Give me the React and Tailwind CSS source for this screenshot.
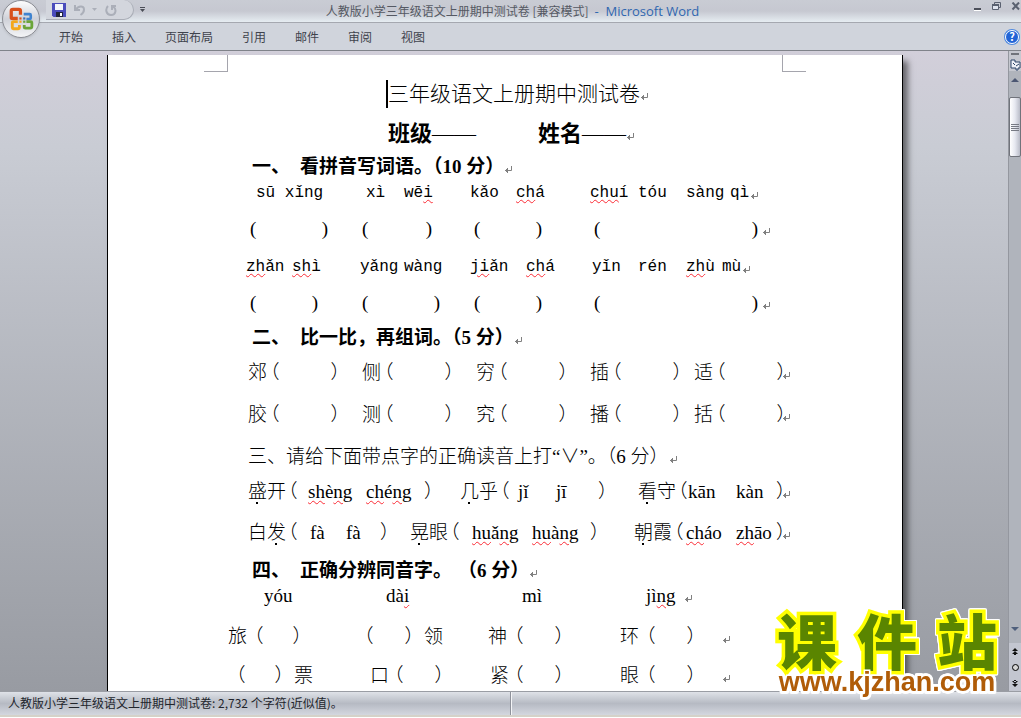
const tabs = ["开始", "插入", "页面布局", "引用", "邮件", "审阅", "视图"]

const compareRows = [
  ["郊", "侧", "穷", "插", "适"],
  ["胶", "测", "究", "播", "括"],
]

const Mark = ({ className = "" }) => (
  <svg viewBox="0 0 9 8" className={`mt-1.5 h-2 w-[9px] shrink-0 ${className}`} fill="none" stroke="#808080" aria-hidden="true">
    <path d="M7.5 0v4.5H1M3.5 2v5M2.5 3v3" />
  </svg>
)

const Line = ({ className = "", children }) => <div className={`flex items-center ${className}`}>{children}</div>

const Cell = ({ className = "", children }) => (
  <span className={`shrink-0 leading-6 whitespace-nowrap ${className}`}>{children}</span>
)

// halt keeps the full-width brackets at half an em
const Paren = ({ className = "", children }) => (
  <Cell className={`[font-feature-settings:'halt'] ${className}`}>{children}</Cell>
)

const Blank = ({ className = "" }) => (
  <span className={`flex shrink-0 justify-between leading-6 [font-feature-settings:'halt'] ${className}`}>
    <span>（</span>
    <span>）</span>
  </span>
)

const SmallBlank = ({ className = "" }) => (
  <span className={`flex shrink-0 justify-between leading-6 ${className}`}>
    <span>(</span>
    <span>)</span>
  </span>
)

// spelling squiggle
const Sq = ({ children }) => (
  <span className="underline decoration-red-500 decoration-wavy decoration-1 underline-offset-2">{children}</span>
)

// dot under the character that is asked about
const Dot = ({ children }) => (
  <span className="relative after:absolute after:-bottom-0.5 after:left-2 after:size-0.5 after:bg-black">{children}</span>
)

const OfficeButton = () => (
  <button
    type="button"
    aria-label="Office"
    className="absolute top-0 left-0.5 z-10 flex size-[38px] items-center justify-center rounded-full border border-[#8b8d94] bg-linear-to-b from-[#fdfdfe] via-[#cfd1d8] to-[#f4f5f7] shadow"
  >
    <svg viewBox="0 0 24 24" className="size-[26px] shrink-0" fill="none" strokeWidth="3">
      <path d="M9 11.500H4Q3 11.500 3 10.500V4.500Q3 3 4.500 3H10Q11.500 3 11.500 4.500V8" stroke="#d8501c" />
      <path d="M14.500 7.500H20Q21 7.500 21 8.500V11Q21 12 20 12H17" stroke="#3f83cf" strokeWidth="2.4" />
      <path d="M9 14.500H5Q4 14.500 4 15.500V20Q4 21 5 21H9.500Q10.500 21 10.500 20V17.500" stroke="#f3a81c" strokeWidth="2.6" />
      <path d="M17 14.500H21Q22 14.500 22 15.500V19Q22 20.500 20.500 20.500H16Q15 20.500 15 19.500V17.500" stroke="#6ba539" strokeWidth="2.6" />
      <path d="M10.500 10.500h2v2h-2z" fill="#d8501c" />
      <path d="M14 10.500h2v2h-2z" fill="#3f6fb5" />
      <path d="M10.500 13.500h2v2h-2z" fill="#f3a81c" />
      <path d="M14 13.500h2v2h-2z" fill="#6ba539" />
    </svg>
  </button>
)

const TitleBar = () => (
  <header className="grid h-[23px] grid-cols-[1fr_auto_1fr] border-b border-[#a5a8b0] bg-linear-to-b from-[#c9ccd4] via-[#c6c8d1] to-[#e6edf2]">
    <div className="flex items-start pl-[46px]">
      <div className="flex h-5 w-[88px] items-center gap-2 rounded-r-full border-r border-b border-[#a9adb6] bg-[#d3d6dd] pl-1.5">
        <button type="button" aria-label="保存">
          <svg viewBox="0 0 14 14" className="size-3.5">
            <path d="M0 0h14v14H1.500L0 12.500z" fill="#4a4cbc" />
            <path d="M3 1h8v6H3z" fill="#f2f5fb" />
            <path d="M4 9h7v5H4z" fill="#20243c" />
            <path d="M8 10h2v3H8z" fill="#fff" />
          </svg>
        </button>
        <button type="button" aria-label="撤消" className="flex items-center gap-1.5">
          <svg viewBox="0 0 12 12" className="size-3" fill="none" stroke="#abafb9" strokeWidth="2">
            <path d="M1 1v5h5M2 5.500C4 2 10 1 10 5.500C10 8 9 9.500 6.500 11" />
          </svg>
          <svg viewBox="0 0 5 3" className="h-[3px] w-[5px]" fill="#abafb9">
            <path d="M0 0h5L2.500 3z" />
          </svg>
        </button>
        <button type="button" aria-label="重复">
          <svg viewBox="0 0 12 12" className="size-3" fill="none" stroke="#abafb9" strokeWidth="2">
            <path d="M3 2C0 5 1 11 6 11C11 11 12 5 8 2.500M7 6V2h4" />
          </svg>
        </button>
      </div>
      <button type="button" aria-label="自定义快速访问工具栏" className="mt-[7px] ml-1.5">
        <svg viewBox="0 0 5 5" className="size-[5px]" fill="#4b4e57">
          <path d="M0 0h5v1H0zM0 2h5L2.500 5z" />
        </svg>
      </button>
    </div>
    <h1 className="pl-1 text-[12px] leading-[22px] whitespace-nowrap text-[#555963]">
      人教版小学三年级语文上册期中测试卷 [兼容模式]
      <span className="ml-1.5 font-['Open_Sans'] text-[13px] text-[#2f67b0]">-&nbsp; Microsoft Word</span>
    </h1>
    <div className="flex items-start justify-end gap-2.5 pt-0.5">
      <button type="button" aria-label="最小化">
        <svg viewBox="0 0 8 9" className="h-[9px] w-2">
          <path d="M0 6h7v2H0z" fill="#4b4f5a" />
          <path d="M0 8h7v1H0z" fill="#fff" />
        </svg>
      </button>
      <button type="button" aria-label="还原">
        <svg viewBox="0 0 9 9" className="size-[9px]" fill="none" stroke="#5a6170">
          <path d="M2.500 3V.5h6v5H7" />
          <path d="M.5 2.500h6v5h-6z" fill="#dfe4ee" />
          <path d="M0 3h7" strokeWidth="2" />
        </svg>
      </button>
      <button type="button" aria-label="关闭">
        <svg viewBox="0 0 10 9" className="h-[9px] w-2.5" fill="none" stroke="#5a6170" strokeWidth="2">
          <path d="M1.500 .5L8 7.500M8 .5L1.500 7.500" />
        </svg>
      </button>
    </div>
  </header>
)

const TabBar = () => (
  <nav className="flex h-7 items-center border-b border-[#80838a] bg-[#d0d4dc] pl-[59px] shadow-[0_1px_0_#e6e8ec]">
    <div className="flex flex-1 gap-[29px] text-[12px] text-[#3f434d]">
      {tabs.map((tab) => (
        <button key={tab} type="button">
          {tab}
        </button>
      ))}
    </div>
    <button
      type="button"
      aria-label="帮助"
      className="mr-0.5 flex size-3.5 items-center justify-center rounded-full border border-white bg-[#2264d6] text-[11px] font-bold text-white ring-1 ring-[#4f8ae0]"
    >
      ?
    </button>
  </nav>
)

const Paper = () => (
  <article className="h-full w-full overflow-hidden border-x border-black bg-white font-['Liberation_Serif','Noto_Sans_CJK_SC',serif] text-[19px] font-light text-black">
    <div className="flex justify-between px-24">
      <span className="h-[17px] w-6 border-r border-b border-[#a5a5ad]" />
      <span className="h-[17px] w-6 border-b border-l border-[#a5a5ad]" />
    </div>
    <div className="pt-0.5 pl-30">
      <Line className="h-10 pl-40 text-[21px]">
        <span className="-ml-0.5 h-7 w-0.5 bg-black" />
        <Cell>三年级语文上册期中测试卷</Cell>
        <Mark />
      </Line>
      <Line className="h-10 pl-40 text-[22px] font-bold">
        <Cell className="w-37.5">班级<span className="font-normal">——</span></Cell>
        <Cell className="w-22">姓名<span className="font-normal">——</span></Cell>
        <Mark />
      </Line>

      {/* 一 */}
      <Line className="h-6.5 pl-6 font-bold">
        <Cell className="w-12">一、</Cell>
        <Cell>看拼音写词语。（10 分）</Cell>
        <Mark />
      </Line>
      <Line className="h-6.5 pl-7 font-['Liberation_Mono'] text-[16px]">
        <Cell className="w-27.5">sū xǐnɡ</Cell>
        <Cell className="w-9.5">xì</Cell>
        <Cell className="w-16.5">wē<Sq>i</Sq></Cell>
        <Cell className="w-11.5">kǎo</Cell>
        <Cell className="w-18.5"><Sq>ch</Sq>á</Cell>
        <Cell className="w-12"><Sq>chu</Sq>í</Cell>
        <Cell className="w-12">tóu</Cell>
        <Cell className="w-11">sànɡ</Cell>
        <Cell className="w-5">qì</Cell>
        <Mark />
      </Line>
      <Line className="h-11.5 pl-5.5">
        <SmallBlank className="mr-8.5 w-19.5" />
        <SmallBlank className="mr-10.5 w-17.5" />
        <SmallBlank className="mr-13 w-17" />
        <SmallBlank className="mr-1 w-41" />
        <Mark />
      </Line>
      <Line className="h-7.5 pl-4.5 font-['Liberation_Mono'] text-[16px]">
        <Cell className="w-11.5"><Sq>zh</Sq>ǎn</Cell>
        <Cell className="w-17"><Sq>sh</Sq>ì</Cell>
        <Cell className="w-11">yǎnɡ</Cell>
        <Cell className="w-16.5">wànɡ</Cell>
        <Cell className="w-14"><Sq>ji</Sq>ǎn</Cell>
        <Cell className="w-16.5"><Sq>ch</Sq>á</Cell>
        <Cell className="w-11.5">yǐn</Cell>
        <Cell className="w-12">rén</Cell>
        <Cell className="w-9"><Sq>zh</Sq>ù</Cell>
        <Cell className="w-5">mù</Cell>
        <Mark />
      </Line>
      <Line className="h-10.5 pl-5.5">
        <SmallBlank className="mr-11 w-17" />
        <SmallBlank className="mr-8.5 w-19.5" />
        <SmallBlank className="mr-13 w-17" />
        <SmallBlank className="mr-1 w-41" />
        <Mark />
      </Line>

      {/* 二 */}
      <Line className="h-7 pl-6 font-bold">
        <Cell className="w-12">二、</Cell>
        <Cell>比一比，再组词。（5 分）</Cell>
        <Mark />
      </Line>
      {compareRows.map((row) => (
        <Line key={row[0]} className="h-10.5 pl-5">
          {row.map((char, i) => (
            <span key={char} className={i === 3 ? "mr-3 flex" : i === 4 ? "flex" : "mr-5.5 flex"}>
              <Cell className="w-5.5">{char}</Cell>
              <Blank className="w-17.5" />
            </span>
          ))}
          <Mark className="-ml-1" />
        </Line>
      ))}

      {/* 三 */}
      <Line className="h-10.5 pl-5">
        <Cell>三、请给下面带点字的正确读音上打“∨”。（6 分）</Cell>
        <Mark />
      </Line>
      <Line className="h-7 pl-5">
        <Cell className="w-10"><Dot>盛</Dot>开</Cell>
        <Paren className="w-5">（</Paren>
        <Cell className="w-14.5"><Sq>sh</Sq>è<Sq>ng</Sq></Cell>
        <Cell className="w-14.5"><Sq>ch</Sq>é<Sq>ng</Sq></Cell>
        <Paren className="w-9">）</Paren>
        <Cell className="w-10"><Dot>几</Dot>乎</Cell>
        <Paren className="w-4.5">（</Paren>
        <Cell className="w-9.5">jǐ</Cell>
        <Cell className="w-10.5">jī</Cell>
        <Paren className="w-10">）</Paren>
        <Cell className="w-10"><Dot>看</Dot>守</Cell>
        <Paren className="w-2.5">（</Paren>
        <Cell className="w-12">kān</Cell>
        <Cell className="w-10">kàn</Cell>
        <Paren className="w-1.5">）</Paren>
        <Mark />
      </Line>
      <Line className="h-13.5 pl-5">
        <Cell className="w-10">白<Dot>发</Dot></Cell>
        <Paren className="w-5.5">（</Paren>
        <Cell className="w-9">fà</Cell>
        <Cell className="w-8.5">fà</Cell>
        <Paren className="w-7.5">）</Paren>
        <Cell className="w-10"><Dot>晃</Dot>眼</Cell>
        <Paren className="w-5.5">（</Paren>
        <Cell className="w-15"><Sq>hu</Sq>ǎ<Sq>ng</Sq></Cell>
        <Cell className="w-14.5"><Sq>hu</Sq>à<Sq>ng</Sq></Cell>
        <Paren className="w-11">）</Paren>
        <Cell className="w-10"><Dot>朝</Dot>霞</Cell>
        <Paren className="w-3">（</Paren>
        <Cell className="w-12.5"><Sq>ch</Sq>áo</Cell>
        <Cell className="w-10"><Sq>zh</Sq>āo</Cell>
        <Paren className="w-1.5">）</Paren>
        <Mark />
      </Line>

      {/* 四 */}
      <Line className="h-5.5 pl-6 font-bold">
        <Cell className="w-12">四、</Cell>
        <Cell className="w-39.5">正确分辨同音字。</Cell>
        <Cell>（6 分）</Cell>
        <Mark />
      </Line>
      <Line className="h-7 pl-9">
        <Cell className="w-30.5">yóu</Cell>
        <Cell className="w-34">dà<Sq>i</Sq></Cell>
        <Cell className="w-31">mì</Cell>
        <Cell className="w-9.5">jì<Sq>ng</Sq></Cell>
        <Mark />
      </Line>
      <Line className="h-13.5">
        <Cell className="w-6.5">旅</Cell>
        <Blank className="mr-15.5 w-12" />
        <Blank className="mr-2.5 w-12.5" />
        <Cell className="w-16">领</Cell>
        <Cell className="w-6.5">神</Cell>
        <Blank className="mr-14 w-12.5" />
        <Cell className="w-6.5">环</Cell>
        <Blank className="mr-6.5 w-12.5" />
        <Mark />
      </Line>
      <Line className="h-6 pl-2">
        <Blank className="mr-2.5 w-12" />
        <Cell className="w-19">票</Cell>
        <Cell className="w-6">口</Cell>
        <Blank className="mr-11.5 w-12.5" />
        <Cell className="w-6">紧</Cell>
        <Blank className="mr-14 w-12.5" />
        <Cell className="w-6.5">眼</Cell>
        <Blank className="mr-6.5 w-12.5" />
        <Mark />
      </Line>
    </div>
  </article>
)

const ScrollBar = () => (
  <aside className="flex w-[13px] shrink-0 flex-col items-center border-l border-[#94979f] bg-[#b0b4bc]">
    <div className="flex h-5 w-full shrink-0 flex-col items-center gap-1 bg-[#c6c8d0] pt-0.5">
      <span className="h-0.5 w-2 shrink-0 bg-[#70737b]" />
      <svg viewBox="0 0 11 12" className="h-3 w-[11px] shrink-0" fill="#f0f2f8" stroke="#2c4468">
        <path d="M1 1h4v2h5v6H8v2H6V9H1z" />
        <path d="M3 4l2 2M6 7l3-2" />
      </svg>
    </div>
    <button type="button" aria-label="向上滚动" className="flex h-[26px] w-full shrink-0 items-center justify-center pb-2">
      <svg viewBox="0 0 8 4" className="h-1 w-2" fill="#4b5672">
        <path d="M4 0L8 4H0z" />
      </svg>
    </button>
    <div className="flex h-[60px] w-full shrink-0 flex-col items-center justify-center gap-px rounded-xs border border-[#70737b] bg-linear-to-r from-white via-[#e6e8f0] to-[#b9bcc8]">
      <span className="h-px w-2 bg-[#777a84]" />
      <span className="h-px w-2 bg-[#777a84]" />
      <span className="h-px w-2 bg-[#777a84]" />
      <span className="h-px w-2 bg-[#777a84]" />
    </div>
    <div className="flex-1" />
    <button type="button" aria-label="向下滚动" className="flex h-4 w-full items-start justify-center">
      <svg viewBox="0 0 8 4" className="h-1 w-2" fill="#4f5f7c">
        <path d="M0 0h8L4 4z" />
      </svg>
    </button>
    <div className="flex h-12 w-full shrink-0 flex-col items-center justify-around bg-[#c3c6d0]">
      <button type="button" aria-label="前一页">
        <svg viewBox="0 0 6 7" className="h-[7px] w-1.5" fill="#111">
          <path d="M3 0l3 3H0zM3 3l3 3H0zM2 5h2v2H2z" />
        </svg>
      </button>
      <button type="button" aria-label="选择浏览对象" className="size-[7px] rounded-full border border-black bg-[#d5d5d5]" />
      <button type="button" aria-label="下一页">
        <svg viewBox="0 0 6 7" className="h-[7px] w-1.5" fill="#111">
          <path d="M3 7l3-3H0zM3 4l3-3H0zM2 0h2v2H2z" />
        </svg>
      </button>
    </div>
  </aside>
)

const Watermark = () => (
  <div className="absolute right-5 bottom-[22px] w-[228px] [filter:drop-shadow(1px_0_0_#fff)_drop-shadow(-1px_0_0_#fff)_drop-shadow(0_1px_0_#fff)_drop-shadow(0_-1px_0_#fff)]">
    <div className="flex justify-between px-1 text-[60px] leading-[58px] font-black text-[#5a8500] [-webkit-text-stroke:7px_#ffff00] [paint-order:stroke_fill]">
      <span>课</span>
      <span>件</span>
      <span>站</span>
    </div>
    <a
      href="#top"
      className="block text-center font-['Liberation_Sans'] text-[27px] leading-7 font-bold text-[#b05c08] [-webkit-text-stroke:3px_#ffffff] [paint-order:stroke_fill]"
    >
      www.kjzhan.com
    </a>
  </div>
)

export default function App() {
  return (
    <div className="relative flex h-screen flex-col overflow-hidden bg-[#d0ced9] font-['Noto_Sans_CJK_SC',sans-serif]">
      <OfficeButton />
      <TitleBar />
      <TabBar />
      <main className="flex min-h-0 flex-1">
        <div className="flex min-w-0 flex-1 justify-center overflow-hidden bg-linear-to-b from-[#d2cfda] via-[#c9ccd4] via-15% to-[#989ba2] pt-1 pl-0.5">
          <div className="flex h-full w-full max-w-[796px] shadow-[5px_6px_6px_#00000080]">
            <Paper />
          </div>
        </div>
        <ScrollBar />
      </main>
      <footer className="flex h-6 shrink-0 items-center border-t border-[#9a9da4] bg-linear-to-b from-[#dfe2e8] via-[#b6bac3] to-[#d4d7df] text-[12px] text-[#22252c]">
        <span className="h-full w-1/2 border-r border-[#8f929b] pl-2 leading-[21px] shadow-[1px_0_0_#f4f5f7]">
          人教版小学三年级语文上册期中测试卷: 2,732 个字符(近似值)。
        </span>
      </footer>
      <div className="h-[3px] shrink-0 border-t-2 border-[#d5d2c9] bg-white" />
      <Watermark />
    </div>
  )
}
